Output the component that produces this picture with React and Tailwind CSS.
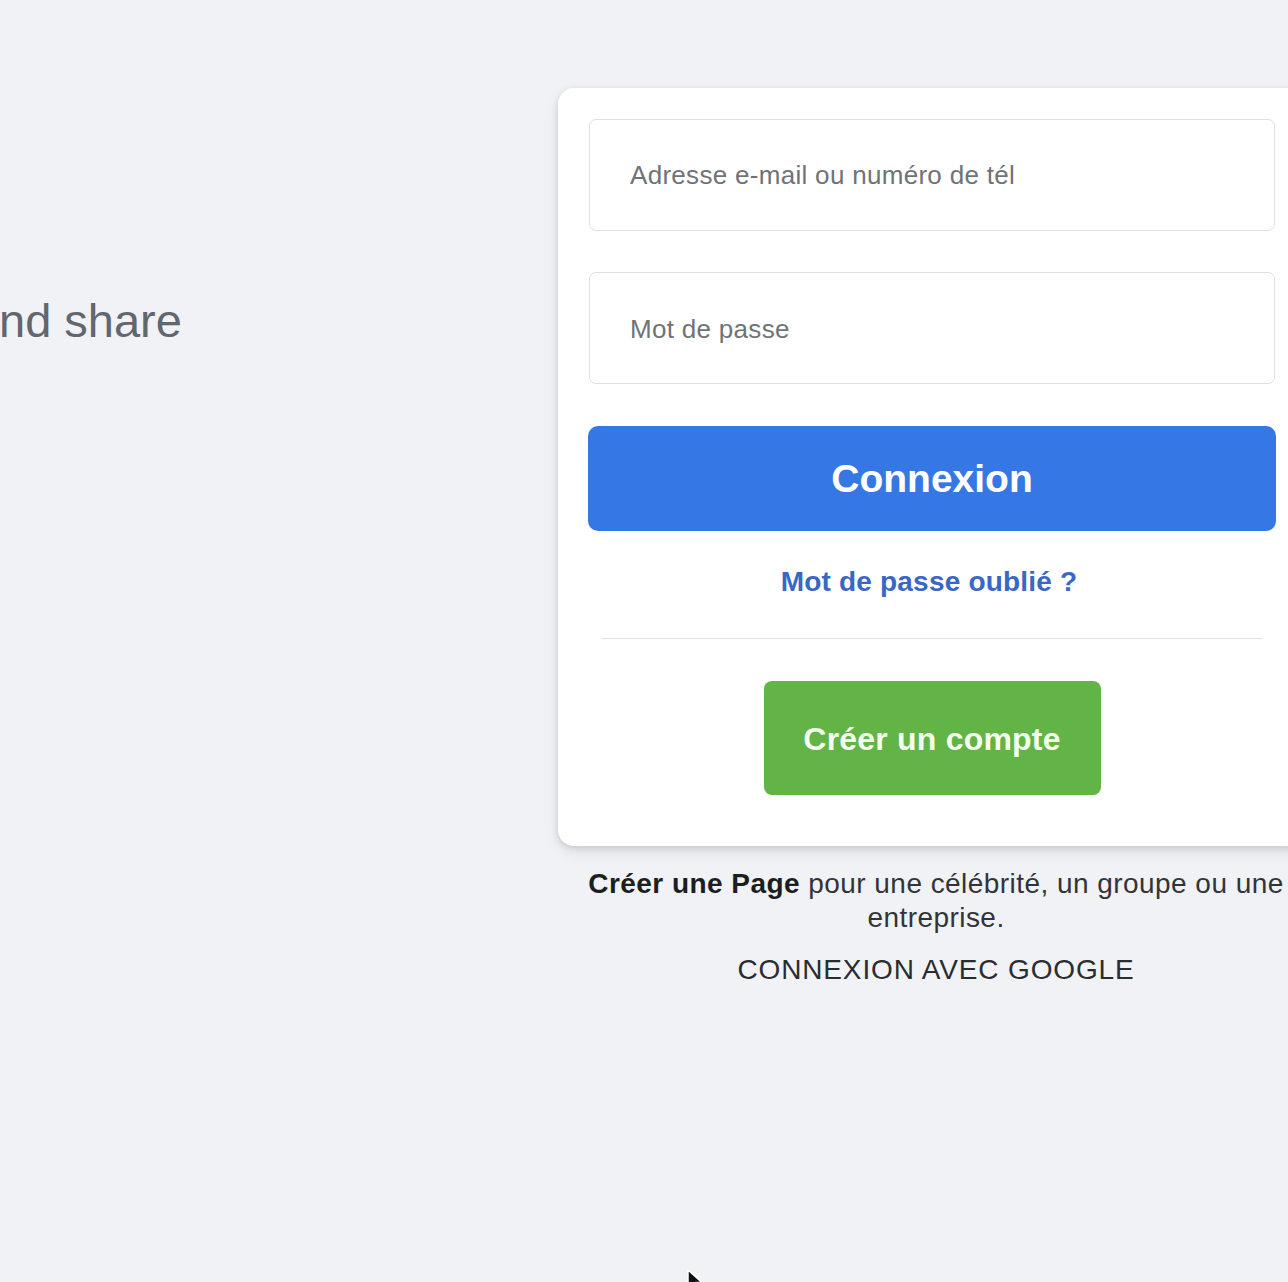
import React from "react";

export default function App() {
  return (
    <div className="relative w-[1288px] h-[1282px] overflow-hidden bg-[#f0f2f5] font-['Liberation_Sans',Arial,sans-serif]">
      <div className="flex">
        <div className="w-[558px] shrink-0 pt-[293px]">
          <p className="text-[47px] leading-[56px] text-[#62666d] whitespace-nowrap -ml-[1px]">nd share</p>
        </div>
        <div className="w-[748px] shrink-0 pt-[88px]">
          <div className="bg-white rounded-[16px] shadow-[0_2px_6px_rgba(0,0,0,0.12),0_6px_16px_rgba(0,0,0,0.08)] px-[31px] pt-[31px] pb-[51px]">
            <div className="h-[112px] border border-[#dddfe2] rounded-[7px] flex items-center px-[40px]">
              <span className="text-[26px] tracking-[0.3px] text-[#6f7378]">Adresse e-mail ou numéro de tél</span>
            </div>
            <div className="mt-[41px] h-[112px] border border-[#dddfe2] rounded-[7px] flex items-center px-[40px]">
              <span className="text-[26px] tracking-[0.3px] text-[#6f7378] relative top-[1px]">Mot de passe</span>
            </div>
            <div className="mt-[42px] -mx-[1px] h-[105px] rounded-[10px] bg-[#3677e6] flex items-center justify-center">
              <span className="text-[39px] font-bold text-white relative top-[1px]">Connexion</span>
            </div>
            <div className="mt-[35px] pr-[6px] text-center text-[28px] tracking-[0.2px] leading-[32px] font-bold text-[#3a66c4]">
              Mot de passe oublié ?
            </div>
            <div className="mt-[40px] mx-[12px] h-[1px] bg-[#dfe1e5]" />
            <div className="mt-[42px] flex justify-center">
              <div className="w-[337px] h-[114px] rounded-[8px] bg-[#62b446] flex items-center justify-center">
                <span className="text-[32px] tracking-[0.2px] font-bold text-[#f4fff0] relative top-[1px]">Créer un compte</span>
              </div>
            </div>
          </div>
          <div className="mt-[21px] pl-[8px] text-center text-[28px] tracking-[0.45px] leading-[34px] text-[#333438]">
            <span className="font-bold text-[#1c1e21]">Créer une Page</span> pour une célébrité, un groupe ou une entreprise.
          </div>
          <div className="mt-[18px] pl-[8px] text-center text-[28px] tracking-[0.85px] leading-[34px] text-[#2b2c30]">
            CONNEXION AVEC GOOGLE
          </div>
        </div>
      </div>
      <svg className="absolute left-[686px] top-[1268px]" width="20" height="24" viewBox="0 0 20 24">
        <path d="M2 2 L2 20 L6.5 15.5 L9.5 22 L12.5 20.8 L9.6 14.5 L16 14.5 Z" fill="#111" stroke="#fff" strokeWidth="1.5" strokeLinejoin="round" />
      </svg>
    </div>
  );
}
